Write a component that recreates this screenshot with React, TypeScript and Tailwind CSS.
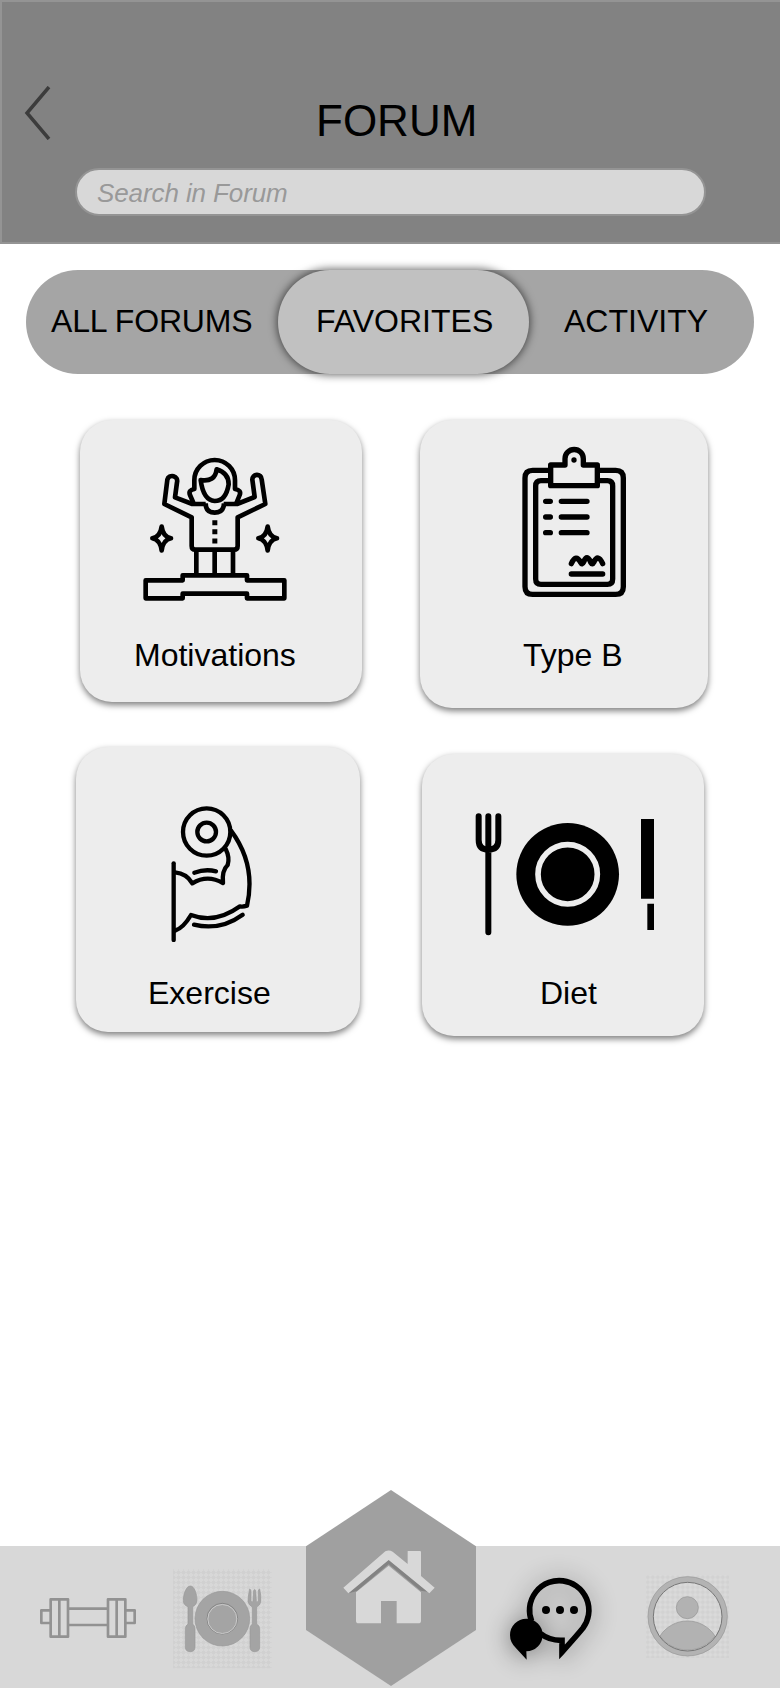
import React from 'react';

const TABS = [
  { label: 'ALL FORUMS', className: 'w-[252px] pl-[25px] tracking-[-0.2px]' },
  {
    label: 'FAVORITES',
    className: 'w-[251px] pl-[38px] rounded-[52px] bg-[#c1c1c1] shadow-[0_0_8px_1px_rgba(0,0,0,0.6)]',
  },
  { label: 'ACTIVITY', className: 'w-[225px] pl-[35px]' },
];

const MotivationIcon: React.FC = () => (
  <svg
    className="ml-[63px] mt-[37px] h-[144px] w-[144px] shrink-0"
    viewBox="220 140 432 432"
    fill="none"
    stroke="#000"
    strokeWidth="14"
    strokeLinejoin="round"
  >
    {/* Hair and face */}
    <path d="M371 277 L361 254 Q355 240 374 236 V210 A61 61 0 0 1 496 210 V236 Q516 240 510 254 L500 279" />
    <path d="M393 209 Q436 216 441 177 Q477 188 477 222 Q469 272 435 272 Q401 270 393 209 Z" />
    {/* Raised arms and shirt */}
    <path d="M408 281 H368 L316 261 L322 216 A14 14 0 0 0 293 208 L284 281 L366 321 V407 Q366 418 377 418 H493 Q504 418 504 407 V321 L587 281 L576 207 A14 14 0 0 0 548 208 L555 260 L502 281 H462" />
    <path d="M408 279 Q408 307 435 307 Q462 307 463 279" />
    <path d="M380 420 V494 M435 420 V494 M490 420 V494" />
    <path d="M228 510 H339 V495 H532 V510 H644 V564 H532 V550 H339 V564 H228 Z" />
    <path d="M276 349 Q280 380 304 384 Q280 389 276 420 Q272 389 248 384 Q272 380 276 349 Z" />
    <path d="M594 349 Q598 380 622 384 Q598 389 594 420 Q590 389 566 384 Q590 380 594 349 Z" />
    <path d="M428 337 H443 M428 364 H443 M428 392 H443" strokeWidth="15" />
  </svg>
);

const ClipboardIcon: React.FC = () => (
  <svg
    className="ml-[102px] mt-[26px] h-[152px] w-[104px] shrink-0"
    viewBox="336 108 312 456"
    fill="none"
    stroke="#000"
    strokeWidth="16"
    strokeLinecap="round"
    strokeLinejoin="round"
  >
    <path d="M420 181 H368 Q345 181 345 204 V530 Q345 553 368 553 H617 Q640 553 640 530 V204 Q640 181 617 181 H566" />
    <path d="M420 212 H393 Q377 212 377 228 V507 Q377 523 393 523 H592 Q608 523 608 507 V228 Q608 212 592 212 H566" />
    <path d="M422 165 H465 V146 A27 27 0 0 1 520 146 V165 H562 V227 H422 Z" />
    <path d="M407 274 H421 M454 274 H531 M407 321 H421 M454 321 H531 M407 368 H421 M454 368 H531 M484 492 H578" />
    <path d="M484 461 Q498 430 512 458 Q516 466 521 456 Q531 430 542 457 Q547 466 552 456 Q564 430 578 461" />
    <circle cx="492" cy="150" r="8" fill="#000" stroke="none" />
  </svg>
);

const MuscleIcon: React.FC = () => (
  <svg
    className="ml-[95px] mt-[58px] h-[137px] w-[81px] shrink-0"
    viewBox="315 195 243 411"
    fill="none"
    stroke="#000"
    strokeWidth="13"
    strokeLinecap="round"
    strokeLinejoin="round"
  >
    <circle cx="422" cy="276" r="71" />
    <circle cx="422" cy="276" r="28" />
    <path d="M323 370 V600" />
    <path d="M327 397 Q362 400 379 430 Q424 402 471 429 Q467 392 485 375 Q492 353 479 327" />
    <path d="M495 272 Q571 374 543 497 Q531 501 522 499 Q448 553 375 525 Q352 564 327 572" />
    <path d="M385 398 Q418 386 450 394 M384 554 Q463 573 530 524" />
  </svg>
);

const DietIcon: React.FC = () => (
  <svg
    className="ml-[53px] mt-[59px] h-[123px] w-[180px] shrink-0"
    viewBox="195 219 540 369"
    fill="none"
    stroke="#000"
  >
    <path d="M206 229 V300 Q206 329 235 329 Q265 329 265 300 V229 M235 229 V577" strokeWidth="18" strokeLinecap="round" />
    <circle cx="473" cy="403" r="154" fill="#000" stroke="none" />
    <circle cx="473" cy="403" r="89" stroke="#ededed" strokeWidth="17" />
    <path d="M693 237 H732 V476 H693 Z M712 491 H732 V570 H712 Z" fill="#000" stroke="none" />
  </svg>
);

const BottomNav: React.FC = () => (
  <nav className="flex h-[142px] items-start bg-[#d8d8d8]">
    <svg className="ml-10 mt-[52px] h-10 w-24 shrink-0" viewBox="120 204 288 120" fill="none" stroke="#929292" strokeWidth="8" strokeLinejoin="round">
      <path d="M152 208 H204 V320 H152 Z M178 208 V320 M324 208 H376 V320 H324 Z M350 208 V320" />
      <path d="M152 241 H124 V279 H152 M376 241 H404 V279 H376 M204 236 H324 M204 285 H324" />
    </svg>

    <svg className="ml-9 mt-[22px] h-[101px] w-[100px] shrink-0" viewBox="513 114 300 303">
      <defs>
        <pattern id="plate-check" width="15" height="15" patternUnits="userSpaceOnUse">
          <path d="M7.5 0 L15 7.5 L7.5 15 L0 7.5 Z" fill="#d1d1d1" />
        </pattern>
      </defs>
      <rect x="516" y="117" width="296" height="298" fill="url(#plate-check)" />
      <g fill="#a4a4a4" stroke="#999" strokeWidth="2">
        <path d="M568 168 C580 168 588 192 588 211 Q587 226 575 230 V282 Q582 287 582 296 V351 Q582 365 568 365 Q553 365 553 351 V296 Q553 287 561 282 V230 Q547 226 547 211 C547 192 556 168 568 168 Z" />
        <path d="M746 177 Q750 178 750 184 V214 Q756 220 756 212 L758 182 Q761 175 764 182 L766 212 Q767 220 772 214 V184 Q772 178 776 177 Q781 198 779 217 Q777 226 767 231 V282 Q776 287 776 296 V351 Q776 365 761 365 Q747 365 747 351 V296 Q747 287 754 282 V231 Q743 226 741 214 Q742 194 746 177 Z" />
        <circle cx="664" cy="266" r="82" />
      </g>
      <circle cx="664" cy="266" r="46" fill="none" stroke="#858585" strokeWidth="3" />
      <circle cx="664" cy="267" r="43.5" fill="none" stroke="#cacaca" strokeWidth="3" />
    </svg>

    <svg className="-mt-14 ml-[34px] h-[196px] w-[170px] shrink-0" viewBox="48 30 510 588">
      <path d="M303 30 L558 199 V450 L303 618 L48 450 V199 Z" fill="#a0a0a0" />
      <path d="M296 238 L414 335 L392 332 L296 253 L201 333 L176 340 Z" fill="#838383" />
      <g fill="#d8d8d8">
        <path d="M160 323 L286 214 Q297 208 308 215 L353 252 V213 H390 Q393 213 393 217 V288 L434 323 L418 340 L296 240 L175 340 Z" />
        <path d="M296 257 L393 337 V422 Q393 430 385 430 H320 V363 H273 V430 H206 Q198 430 198 422 V337 Z" />
      </g>
    </svg>

    <svg
      className="ml-[34px] mt-[31px] h-[83px] w-[82px] shrink-0 overflow-visible drop-shadow-[0_2px_12px_rgba(0,0,0,0.45)]"
      viewBox="60 111 246 249"
    >
      <path d="M125 244 A89 89 0 1 1 279 264 Q262 285 216 336 V301 Q178 302 152 281" fill="none" stroke="#000" strokeWidth="17" />
      <path d="M109 236 A49 49 0 0 1 109 334 L110 359 L77 323 Q60 307 60 285 A49 49 0 0 1 109 236 Z" />
      <circle cx="168" cy="210" r="12" />
      <circle cx="210" cy="210" r="12" />
      <circle cx="252" cy="210" r="12" />
    </svg>

    <svg className="ml-[54px] mt-[29px] h-[83px] w-[83px] shrink-0" viewBox="467 106 249 249">
      <defs>
        <pattern id="profile-check" width="15" height="15" patternUnits="userSpaceOnUse">
          <rect width="15" height="15" fill="#dadada" />
          <path d="M7.5 0 L15 7.5 L7.5 15 L0 7.5 Z" fill="#d2d2d2" />
        </pattern>
      </defs>
      <rect x="467" y="106" width="249" height="249" fill="url(#profile-check)" />
      <path d="M509 289 A98 98 0 0 1 674 289 A102 102 0 0 1 509 289 Z" fill="#b2b2b2" stroke="#929292" strokeWidth="2" />
      <circle cx="591" cy="204" r="33" fill="#b2b2b2" stroke="#969696" strokeWidth="2" />
      <circle cx="592" cy="230" r="111" fill="none" stroke="#b3b3b3" strokeWidth="17" />
      <circle cx="592" cy="230" r="119" fill="none" stroke="#999" strokeWidth="2" />
      <circle cx="592" cy="231" r="103" fill="none" stroke="#777" strokeWidth="3" />
    </svg>
  </nav>
);

const CARD = 'flex flex-col items-start rounded-[32px] bg-[#ededed] shadow-[0_3px_6px_rgba(0,0,0,0.5)]';

const App: React.FC = () => {
  return (
    <div className="flex h-[1688px] w-[780px] flex-col overflow-hidden bg-white font-['Liberation_Sans',sans-serif] text-[32px] leading-9 text-black">
      <header className="flex h-[244px] shrink-0 flex-col border-2 border-r-0 border-[#949494] bg-[#828282]">
        <div className="flex h-[166px] items-start">
          <svg className="ml-[21px] mt-[84px] h-[54px] w-7" viewBox="0 0 28 54" fill="none" stroke="#3c3c3c" strokeWidth="3.5">
            <path d="M26 1 L4 27 L26 53" />
          </svg>
          <h1 className="ml-[265px] mt-[94px] text-[44px] leading-[50px]">FORUM</h1>
        </div>
        <input
          type="text"
          placeholder="Search in Forum"
          className="ml-[73px] h-12 w-[631px] rounded-full border-2 border-[#949494] bg-[#d8d8d8] pl-5 pt-0.5 text-[26px] tracking-[-0.1px] italic placeholder:text-[#999] placeholder:opacity-100"
        />
      </header>

      <div className="mx-[26px] mt-[26px] flex h-[104px] shrink-0 rounded-[52px] bg-[#a5a5a5]">
        {TABS.map((tab) => (
          <button key={tab.label} className={`flex items-center whitespace-nowrap pb-0.5 text-left ${tab.className}`}>
            {tab.label}
          </button>
        ))}
      </div>

      <main className="mt-[46px] flex grow items-start pl-[76px]">
        <div className="flex w-[344px] flex-col">
          <section className={`ml-1 h-[282px] w-[282px] ${CARD}`}>
            <MotivationIcon />
            <h2 className="ml-[54px] mt-9">Motivations</h2>
          </section>
          <section className={`mt-[45px] h-[285px] w-[284px] ${CARD}`}>
            <MuscleIcon />
            <h2 className="ml-[72px] mt-[33px]">Exercise</h2>
          </section>
        </div>
        <div className="flex flex-col">
          <section className={`h-[288px] w-[288px] ${CARD}`}>
            <ClipboardIcon />
            <h2 className="ml-[103px] mt-[39px]">Type B</h2>
          </section>
          <section className={`ml-0.5 mt-[46px] h-[282px] w-[282px] ${CARD}`}>
            <DietIcon />
            <h2 className="ml-[118px] mt-[39px]">Diet</h2>
          </section>
        </div>
      </main>

      <BottomNav />
    </div>
  );
};

export default App;
